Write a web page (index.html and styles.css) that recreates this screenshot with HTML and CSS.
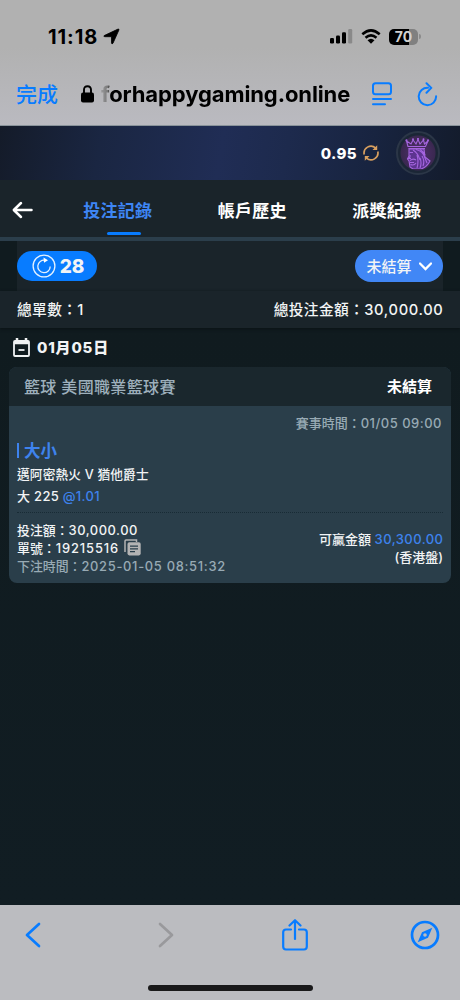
FILE: index.html
```html
<!DOCTYPE html>
<html lang="zh-Hant">
<head>
<meta charset="utf-8">
<meta name="viewport" content="width=device-width, initial-scale=1">
<title>投注記錄</title>
<link rel="stylesheet" href="styles.css">
</head>
<body>
<div class="screen">
  <header class="browser-top">
    <div class="status">
      <span class="clock">11:18</span>
      <svg class="location" width="17" height="17" viewBox="0 0 17 17"><path d="M1.200 7.600 15 1.100Q16.300.7 15.900 2L10 15.200Q8.900 16.800 8.500 14.900V8.700H1.800Q.2 8.500 1.200 7.600Z" stroke="#000" stroke-width=".8" stroke-linejoin="round"/></svg>
      <svg class="signal" width="23" height="15" viewBox="0 0 23 15"><rect x="0" y="9" width="4" height="5.500" rx="1.200"/><rect x="6" y="6.500" width="4" height="8" rx="1.200"/><rect x="12" y="3.200" width="4" height="11.300" rx="1.200"/><rect class="off" x="18.200" y="0" width="4" height="14.500" rx="1.200"/></svg>
      <svg class="wifi" width="20" height="15" viewBox="0 0 20 15"><path d="M1.300 5.300Q10-2.500 18.700 5.300M4.500 8.800Q10 4 15.500 8.800" fill="none" stroke="#000" stroke-width="2.500"/><path d="M6.500 11.200Q10 8.200 13.500 11.200L10 14.700Z"/></svg>
      <span class="battery">70</span><i class="battery-tip"></i>
    </div>
    <div class="address">
      <span class="done">完成</span>
      <svg class="lock" width="13" height="18" viewBox="0 0 13 18"><rect x="0" y="7.500" width="13" height="10" rx="2"/><path d="M3 8V4.800Q3 1.200 6.500 1.200T10 4.800V8" fill="none" stroke="#000" stroke-width="1.900"/></svg>
      <span class="url">forhappygaming.online</span>
      <svg class="reader" width="20" height="24" viewBox="0 0 20 24"><rect x="1" y="1.200" width="18" height="11" rx="2.500"/><path d="M1 17H19M1 22.300H13"/></svg>
      <svg class="reload" width="21" height="25" viewBox="0 0 21 25"><path d="M11 5.800A8.700 8.700 0 1 0 19.100 14.300M9.500 1.200 14.300 5.900 9.500 10.700"/></svg>
    </div>
  </header>

  <section class="account">
    <span class="balance">0.95</span>
    <svg class="refresh" width="16" height="16" viewBox="0 0 16 16"><path d="M1.200 9.500A6.900 6.900 0 0 1 12.500 2.900M14.800 6.500A6.900 6.900 0 0 1 3.500 13.100"/><path class="tips" d="M14.200 .3V5H9.500ZM1.800 15.700V11H6.500Z"/></svg>
    <div class="avatar">
      <svg width="26" height="31" viewBox="0 0 26 31">
        <path class="bust" d="M4 11H19L20 19 25 23Q22 29 16 31H8L5 29 4 23 2.500 21 4 18Z"/>
        <path d="M3 8.500 1.500 3 6 6 8 2 11 6 13 1.500 15 6 18.500 2 19.500 6 23 3 20.500 8.500ZM3.500 10.500H20"/>
        <path d="M11 11.500Q18 13 20 20M15 11.500Q19 14 20 17M8 12Q13 15 15 22M4.500 14.500H8M5 17V19L3.500 20.500H6M5 22.500Q8 20 11 22M5 24.500H9M5.500 26.500Q9 28 11 25M12 17Q14 23 12 30M15 20Q17 25 15 30M17 18Q20 23 18 28M20 20 22 25"/>
        <path class="dots" d="M1.500 2.300V2.400M8 1.200V1.300M13 .9V1M18.500 1.200V1.300M23 2.300V2.400"/>
      </svg>
    </div>
  </section>

  <nav class="tabs">
    <svg class="back" width="21" height="18" viewBox="0 0 21 18"><path d="M9 2 1.800 9 9 16M2 9H19.500"/></svg>
    <span class="tab active">投注記錄</span>
    <span class="tab">帳戶歷史</span>
    <span class="tab">派獎紀錄</span>
  </nav>

  <section class="filters">
    <div class="filter-row">
      <button class="timer"><svg width="24" height="24" viewBox="0 0 24 24"><circle cx="12" cy="12" r="10.900"/><path d="M13 6.300A6.200 6.200 0 1 0 18.200 12.400"/><path class="tip" d="M11.500 3.500 16 6.200 12 8.800Z"/></svg><span>28</span></button>
      <button class="select"><span>未結算</span><svg width="13" height="9" viewBox="0 0 13 9"><path d="M1 1.500 6.500 7 12 1.500"/></svg></button>
    </div>
  </section>
  <section class="totals"><span>總單數：1</span><span class="total-amount">總投注金額：<b>30,000.00</b></span></section>

  <main>
    <div class="date">
      <svg width="17" height="19" viewBox="0 0 17 19"><rect x="1" y="3" width="15" height="15" rx="1"/><path d="M1 5H16M4 0V5M13 0V5" stroke-width="2.500"/><path d="M5.500 12H11.500"/></svg>
      <span>01月05日</span>
    </div>
    <article class="card">
      <header class="card-head"><span class="league">籃球 美國職業籃球賽</span><span class="state">未結算</span></header>
      <div class="card-body">
        <div class="event-time">賽事時間：<b>01/05 09:00</b></div>
        <div class="market"><i></i><span>大小</span></div>
        <div class="teams">邁阿密熱火 V 猶他爵士</div>
        <div class="pick">大 225 <b class="odds">@1.01</b></div>
        <div class="details">
          <div class="ticket">
            <div>投注額：<b>30,000.00</b></div>
            <div class="number"><span>單號：<b>19215516</b></span><svg width="17" height="17" viewBox="0 0 17 17"><path d="M1 13V2Q1 1 2 1H12.500V3" fill="none" stroke="#b3b3b3" stroke-width="1.500"/><rect x="3.500" y="3.200" width="13.200" height="13.200" rx="1.800" fill="#b3b3b3"/><path d="M6 7.200H14M6 9.900H14M6 12.600H11" stroke="#293e4a" stroke-width="1.300"/></svg></div>
            <div class="placed">下注時間：<b>2025-01-05 08:51:32</b></div>
          </div>
          <div class="win"><div>可贏金額 <b class="odds">30,300.00</b></div><div>(香港盤)</div></div>
        </div>
      </div>
    </article>
  </main>

  <footer class="browser-bottom">
    <div class="tools">
      <svg width="16" height="26" viewBox="0 0 16 26"><path d="M14 2 2 13 14 24"/></svg>
      <svg class="disabled" width="16" height="26" viewBox="0 0 16 26"><path d="M2 2 14 13 2 24"/></svg>
      <svg class="share" width="26" height="32" viewBox="0 0 26 32"><path d="M9 10.500H4Q1.200 10.500 1.200 13.300V27.500Q1.200 30.500 4 30.500H22Q24.800 30.500 24.800 27.500V13.300Q24.800 10.500 22 10.500H17M13 20V2M7.500 6.500 13 1.200 18.500 6.500"/></svg>
      <svg class="compass" width="30" height="30" viewBox="0 0 30 30"><circle cx="15" cy="15" r="13"/><path d="M22.300 7.700 18 17.800 7.700 22.300 12 12.200Z" fill="#087cff" stroke="none"/><circle cx="15" cy="15" r="1.800" fill="#bbbcc0" stroke="none"/></svg>
    </div>
    <div class="home"></div>
  </footer>
</div>
</body>
</html>
```
FILE: styles.css
```css
* { box-sizing: border-box; }
body { margin: 0; background: #101b1f; color: #f2f4f5; font-family: Inter, "Noto Sans CJK TC", sans-serif; }
svg { display: block; flex: none; }
b { font-weight: inherit; }
button { border: 0; padding: 0; font: inherit; color: inherit; }
.screen { width: 460px; height: 1000px; display: flex; flex-direction: column; overflow: hidden; white-space: nowrap; }

.browser-top { height: 126px; background: linear-gradient(#b1b1b1 0, #b1b1b1 38%, #babac0 100%); border-bottom: 1px solid #89939a; color: #000; }
.status { height: 62px; padding: 11px 0 0 48px; display: flex; align-items: center; }
.clock { width: 55px; font-size: 20px; font-weight: 700; letter-spacing: .9px; line-height: 24px; }
.signal { margin: 0 0 0 210px; }
.off { fill: #898989; }
.wifi { margin-left: 8px; }
.battery { width: 29px; height: 16px; margin-left: 8px; border-radius: 5px; background: linear-gradient(90deg, #000 70%, #808080 70%); color: #d0d0d0; font-size: 14px; font-weight: 700; line-height: 16px; text-align: center; }
.battery-tip { width: 2px; height: 5px; margin-left: 1px; border-radius: 0 2px 2px 0; background: #8b8b8b; }
.address { height: 64px; padding-left: 16px; display: flex; align-items: center; }
.done { width: 65px; padding-top: 1px; color: #087cff; font-size: 21px; font-weight: 500; line-height: 30px; }
.lock { margin-top: -1px; }
.url { width: 271px; padding-left: 7px; font-size: 22px; font-weight: 700; line-height: 30px; letter-spacing: -.1px; background: linear-gradient(90deg, #9b9b9d 7px, #777 14px, #000 16px); background-clip: text; -webkit-background-clip: text; color: transparent; }
.reader, .reload { fill: none; stroke: #087cff; stroke-width: 2; stroke-linecap: round; stroke-linejoin: round; }
.reader { margin-left: 7px; }
.reload { margin-left: 25px; }

.account { height: 54px; padding: 0 20px 0 0; display: flex; align-items: center; justify-content: flex-end; background: linear-gradient(100deg, #141b29 0, #1a2642 22%, #202d55 48%, #1d2a4d 62%, #182440 80%, #131b2b 100%); }
.balance { font-size: 15px; font-weight: 800; letter-spacing: .4px; color: #fff; }
.refresh { margin-left: 6px; fill: none; stroke: #d9a05f; stroke-width: 1.700; }
.tips { fill: #d9a05f; stroke: none; }
.avatar { width: 44px; height: 44px; margin-left: 17px; border: 2px solid #2b3647; border-radius: 50%; display: grid; place-items: center; background: radial-gradient(circle, #52306f 0, #3a2850 17px, #1b2636 18px); }
.avatar svg { fill: none; stroke: #a565df; stroke-width: 1.100; }
.avatar .bust { fill: #5d3490; }
.avatar .dots { stroke-width: 2; stroke-linecap: round; }

.tabs { height: 61px; padding-left: 12px; display: flex; align-items: center; background: #1a242a; border-bottom: 4px solid #2b3e4b; }
.back { margin-right: 17.500px; fill: none; stroke: #fff; stroke-width: 2.500; stroke-linecap: round; stroke-linejoin: round; margin-top: 2px; }
.tab { width: 134.500px; height: 57px; padding-top: 3px; display: flex; flex-direction: column; align-items: center; font-size: 17px; font-weight: 700; line-height: 57px; color: #fff; letter-spacing: .2px; }
.active { color: #3e86f5; }
.active::after { content: ""; width: 34px; height: 3px; flex: none; margin: -8px 0 0 13px; background: #087cff; border-radius: 2px; }

.filters { height: 50px; padding: 0 17px; background: #101b1f; }
.filter-row { height: 50px; display: flex; align-items: center; justify-content: space-between; background: #1a242a; }
.timer { width: 80px; height: 30px; border-radius: 15px; background: #087cff; display: flex; align-items: center; justify-content: center; gap: 4px; padding-left: 2px; font-size: 19px; font-weight: 800; }
.timer svg { fill: none; stroke: #e4f1ff; stroke-width: 1.300; }
.timer .tip { fill: #fff; stroke: none; }
.select { width: 88px; height: 32px; border-radius: 16px; background: #4187f6; display: flex; align-items: center; justify-content: center; gap: 7px; font-size: 15px; font-weight: 500; }
.select span { margin-top: -2px; }
.select svg { fill: none; stroke: #fff; stroke-width: 2.300; stroke-linecap: round; }
.totals { height: 37px; padding: 1px 17px 0; display: flex; justify-content: space-between; background: #1a242a; font-size: 14.700px; font-weight: 500; line-height: 37px; letter-spacing: .4px; box-shadow: 0 1px 3px #0b1215; position: relative; }
.totals b { letter-spacing: .65px; }
.total-amount { margin-right: -.5px; }

main { flex: 1; background: linear-gradient(#101b1f, #111d23); padding: 0 9px; }
.date { height: 39px; padding-left: 4px; display: flex; align-items: center; gap: 7px; font-size: 15px; font-weight: 800; letter-spacing: .8px; }
.date svg { fill: none; stroke: #f0f2f3; stroke-width: 1.800; }
.date span { margin-top: -2px; }
.card { height: 216px; border-radius: 8px; overflow: hidden; background: #2a3e4a; }
.card-head { height: 39px; padding: 0 19px 0 15px; display: flex; justify-content: space-between; background: #1a272d; line-height: 40px; }
.league { color: #9eb0bc; font-size: 16px; letter-spacing: .35px; font-weight: 500; }
.state { color: #fff; font-size: 15px; font-weight: 700; }
.card-body { padding: 7px 8px 0; font-size: 13px; font-weight: 500; }
.event-time { height: 21px; line-height: 20px; padding-right: 1px; color: #98aab4; text-align: right; }
.event-time b { letter-spacing: .5px; }
.market { height: 32px; display: flex; align-items: center; gap: 5px; color: #3e83ee; font-size: 16.500px; font-weight: 700; }
.market i { width: 2px; height: 15px; background: currentColor; }
.teams { height: 19px; line-height: 18px; font-size: 12.700px; letter-spacing: .15px; }
.pick { height: 27px; line-height: 23px; letter-spacing: .3px; }
.odds { color: #3e83ee; }
.details { padding-top: 9px; display: flex; justify-content: space-between; border-top: 1px dotted #182b35; }
.ticket { line-height: 18px; font-size: 12.900px; }
.ticket b { letter-spacing: .55px; }
.number { display: flex; gap: 5px; }
.number svg { margin-top: -1px; }
.ticket .number b { letter-spacing: .9px; }
.placed { color: #98aab4; }
.ticket .placed b { letter-spacing: .7px; }
.win { padding-top: 8px; line-height: 18px; text-align: right; }
.win b { letter-spacing: .45px; margin-right: -.4px; }

.browser-bottom { height: 95px; background: #bbbcc0; }
.tools { height: 78px; padding: 0 20px 18px 25px; display: flex; align-items: center; justify-content: space-between; }
.tools svg { fill: none; stroke: #087cff; stroke-width: 2.700; stroke-linecap: round; stroke-linejoin: round; }
.tools .disabled { stroke: #99999c; margin-left: 15px; }
.share { margin-left: 6px; }
.tools .share { stroke-width: 2.200; }
.home { width: 165px; height: 6px; margin: 2px auto 0; border-radius: 3px; background: #19191a; }
```
